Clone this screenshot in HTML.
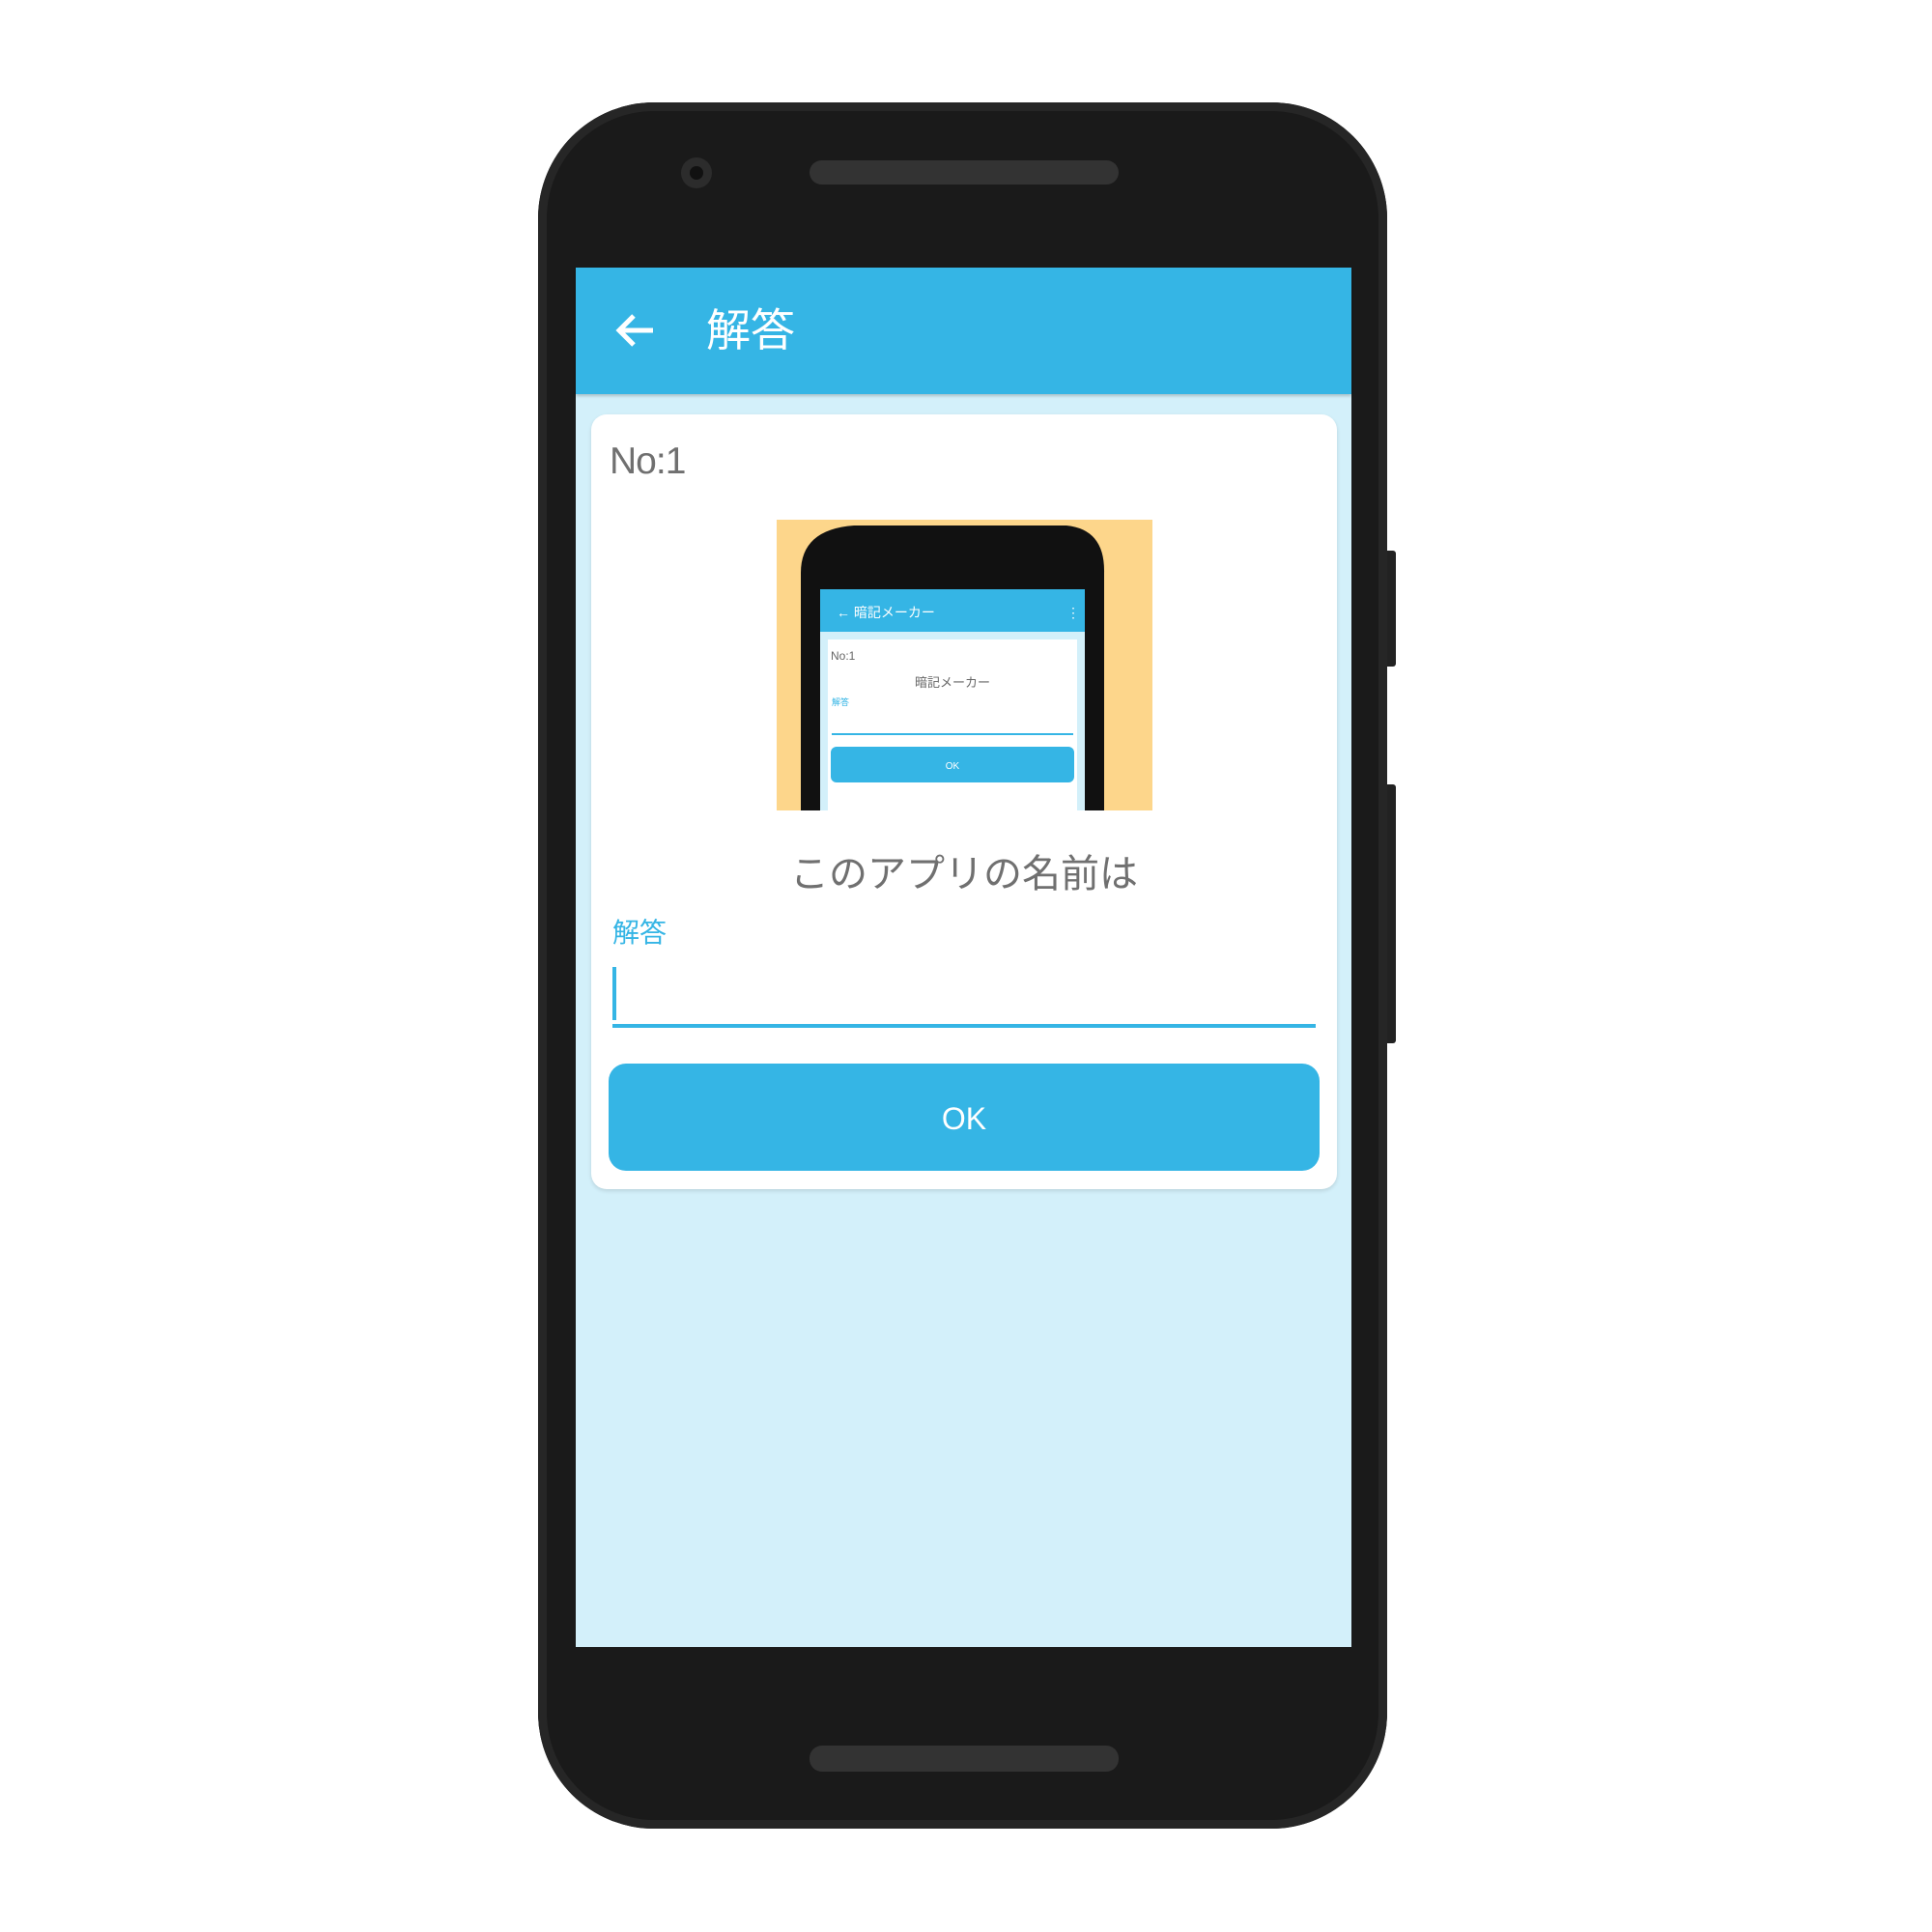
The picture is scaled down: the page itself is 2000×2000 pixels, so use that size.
<!DOCTYPE html>
<html><head><meta charset="utf-8"><style>
html,body{margin:0;padding:0;width:2000px;height:2000px;background:#fff;overflow:hidden;font-family:"Liberation Sans","Noto Sans CJK JP",sans-serif}
.a{position:absolute}
</style></head><body>
<div class="a" style="left:557px;top:106px;width:879px;height:1787px;background:#1a1a1a;border-radius:120px;box-shadow:inset 0 0 0 9px #262626"></div>
<div class="a" style="left:1436px;top:570px;width:9px;height:120px;background:#222;border-radius:0 3px 3px 0"></div>
<div class="a" style="left:1436px;top:812px;width:9px;height:268px;background:#222;border-radius:0 3px 3px 0"></div>
<div class="a" style="left:838px;top:166px;width:320px;height:25px;background:#333;border-radius:13px"></div>
<div class="a" style="left:838px;top:1807px;width:320px;height:27px;background:#333;border-radius:13px"></div>
<div class="a" style="left:705px;top:163px;width:32px;height:32px;background:#2c2c2c;border-radius:50%"></div>
<div class="a" style="left:714px;top:172px;width:14px;height:14px;background:#111;border-radius:50%"></div>
<div class="a" style="left:596px;top:277px;width:803px;height:1428px;background:#d3f0fa"></div>
<div class="a" style="left:596px;top:277px;width:803px;height:131px;background:#35b5e5;box-shadow:0 2px 3px rgba(0,0,0,.2)"></div>
<svg class="a" style="left:636px;top:322px" width="44" height="40" viewBox="0 0 44 40"><path d="M40 20H6M20 5L5 20L20 35" stroke="#fff" stroke-width="5" fill="none"/></svg>
<div class="a" style="left:731px;top:312px;font-size:46px;color:#fff;line-height:60px">解答</div>
<div class="a" style="left:612px;top:429px;width:772px;height:802px;background:#fff;border-radius:16px;box-shadow:0 2px 4px rgba(0,0,0,.12)"></div>
<div class="a" style="left:631px;top:453px;font-size:39px;color:#707070;line-height:50px;letter-spacing:-1px">No:1</div>
<svg class="a" style="left:804px;top:538px" width="389" height="301" viewBox="0 0 389 301">
<rect width="389" height="301" fill="#fdd68b"/>
<path d="M25 301V55Q25 10 80 6H300Q340 10 339 55V301Z" fill="#111"/>
<rect x="45" y="72" width="274" height="229" fill="#d3f0fa"/>
<rect x="45" y="72" width="274" height="44" fill="#35b5e5"/>
<text x="62" y="101" font-size="14" fill="#fff" font-family="Liberation Sans,Noto Sans CJK JP,sans-serif">←  暗記メーカー</text>
<text x="300" y="101" font-size="14" fill="#fff">⋮</text>
<rect x="53" y="124" width="258" height="177" fill="#fff"/>
<text x="56" y="145" font-size="12" fill="#666">No:1</text>
<text x="182" y="173" font-size="13" fill="#666" text-anchor="middle" font-family="Liberation Sans,Noto Sans CJK JP,sans-serif">暗記メーカー</text>
<text x="57" y="192" font-size="9" fill="#35b5e5" font-family="Noto Sans CJK JP,sans-serif">解答</text>
<rect x="57" y="221" width="250" height="2" fill="#35b5e5"/>
<rect x="56" y="235" width="252" height="37" rx="6" fill="#35b5e5"/>
<text x="182" y="258" font-size="10" fill="#fff" text-anchor="middle">OK</text>
</svg>
<div class="a" style="left:612px;top:877px;width:772px;text-align:center;font-size:40px;color:#707070;line-height:56px">このアプリの名前は</div>
<div class="a" style="left:634px;top:948px;font-size:28px;color:#35b5e5;line-height:36px">解答</div>
<div class="a" style="left:634px;top:1001px;width:4px;height:55px;background:#35b5e5"></div>
<div class="a" style="left:634px;top:1060px;width:728px;height:4px;background:#35b5e5"></div>
<div class="a" style="left:630px;top:1101px;width:736px;height:111px;background:#35b5e5;border-radius:18px;color:#fff;font-size:32px;text-align:center;line-height:114px">OK</div>
</body></html>
